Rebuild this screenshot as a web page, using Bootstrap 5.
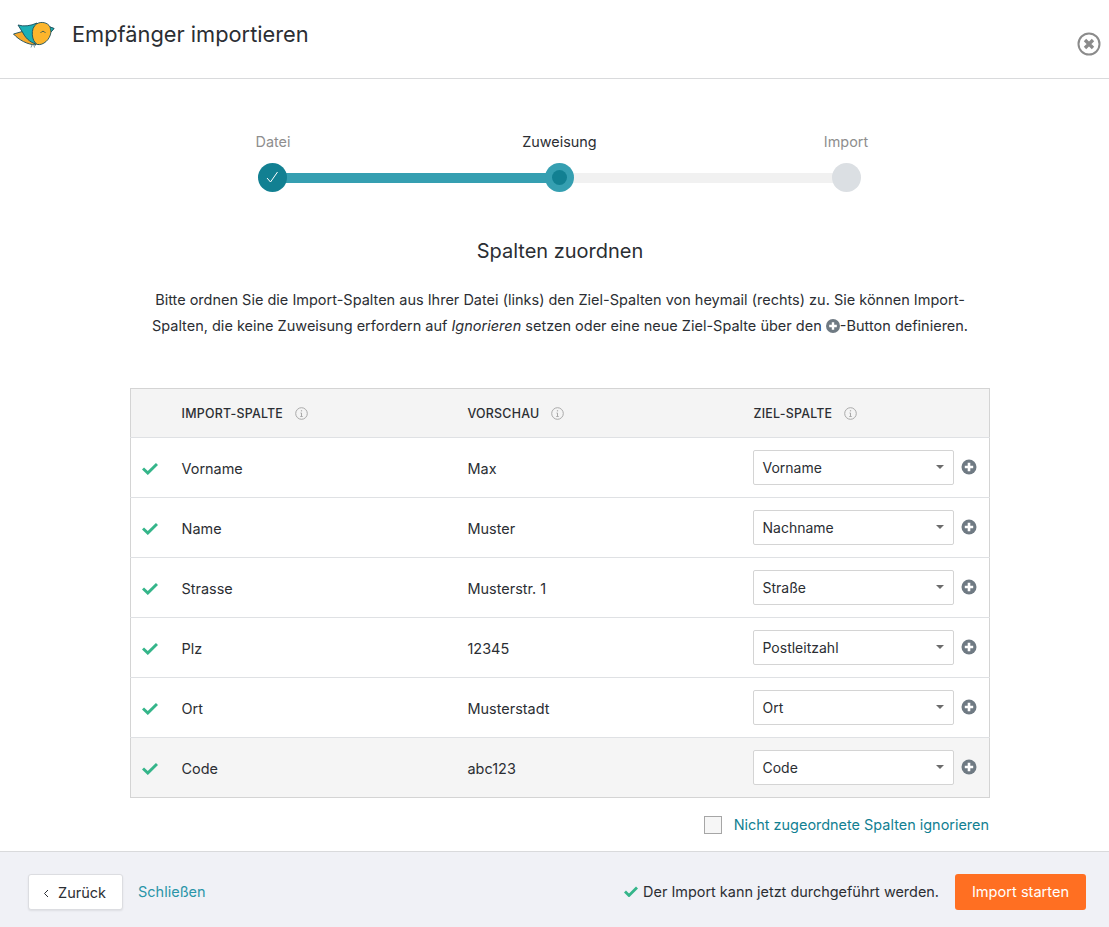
<!DOCTYPE html>
<html lang="de"><head><meta charset="utf-8"><title>Empfänger importieren</title>
<link href="https://cdn.jsdelivr.net/npm/bootstrap@5.3.0/dist/css/bootstrap.min.css" rel="stylesheet">
<style>
html,body{height:100%}
body{font-family:Inter,"Liberation Sans",sans-serif;font-size:14.45px;color:#2b2e33;background:#fff}
.shell{height:927px;width:1109px;overflow:hidden}
.topbar{height:79px;border-bottom:1px solid #d9dadc;padding:0 8px 10px 13px}
.topbar h1{font-size:21.8px;font-weight:400;margin:0 0 0 17px;color:#2b2e33}
.closer{margin-top:20px}
.mainarea{padding-left:11px}
.stepper{width:693px;margin:53px 0 0 202px}
.steplabel{width:120px;text-align:center;color:#8e8e8e;font-size:14.4px;line-height:20px}
.steplabel.on{color:#2b2e33}
.track{width:603px;height:29px;margin:11px auto 0;position:relative}
.track-bg{height:10px;background:#f1f1f1;position:absolute;left:14px;right:14px;top:10px}
.track-fill{height:10px;background:#359fb1;position:absolute;left:14px;width:288px;top:10px}
.dot{width:29px;height:29px;border-radius:50%;position:absolute;top:0}
.dot-done{left:0;background:#128092}
.dot-cur{left:287px;background:#359fb1}
.dot-cur::after{content:"";position:absolute;left:7px;top:7px;width:15px;height:15px;border-radius:50%;background:#128092}
.dot-next{right:0;background:#dbdfe3}
.subhead{font-size:20px;font-weight:400;text-align:center;margin:0;padding-top:45px;line-height:28px}
.intro{width:860px;margin:22px auto 0;text-align:center;line-height:26px;color:#2b2e33;font-size:14.5px}
.mapwrap{width:860px;margin:49px auto 0}
.maptable{width:860px;table-layout:fixed;border-collapse:collapse;border:1px solid #d4d4d4;margin:0}
.maptable th{background:#f4f4f4;height:49px;font-size:12.4px;font-weight:500;letter-spacing:.25px;color:#2b2e33;border-bottom:1px solid #dfe1e4;vertical-align:middle;padding:2px 0 0}
.maptable td{height:60px;border-bottom:1px solid #dfe1e4;vertical-align:middle;padding:1px 0 0;color:#2b2e33}
.maptable tr:last-child td{border-bottom:0;background:#f5f5f5}
.cellword{display:block;padding-top:2px}
.c0{width:51px}.c1,.c2{width:286px}
.tick{display:block;margin-left:11px}
.infoicon{margin-left:12px;vertical-align:-2px}
.pick{width:201px;height:35px;background:#fff;border:1px solid #d4d4d4;border-radius:2px;padding:0 9px;position:relative;font-size:14px;line-height:33px;margin-left:-1px}
.pick::after{content:"";position:absolute;right:9px;top:14px;border:4px solid transparent;border-top-color:#6c6c6c;border-bottom:0}
.cellflex{display:flex;align-items:center;gap:7px;margin-top:-2px}
.ignore{height:53px;gap:12px;color:#128092;padding-right:1px}
.box{width:18px;height:18px;border:1px solid #a6a6a6;background:#f6f6f6;display:block}
.footer-bar{height:76px;background:#f0f1f6;border-top:1px solid #d9dadc;padding:5px 23px 0 28px}
.backbtn{width:95px;height:36px;background:#fff;border:1px solid #dcdde1;border-radius:3px;box-shadow:0 1px 2px rgba(0,0,0,.08);color:#2b2e33;font-size:14.5px;padding:1px 2px 0 0}
.closelink{color:#2a95a8;text-decoration:none;margin-left:15px;font-size:14.5px}
.status{margin-right:16px;gap:5px}
.startbtn{width:131px;height:36px;background:#ff6f22;border:0;border-radius:3px;color:#fff;font-size:14.6px;padding:2px 0 0}
</style></head><body>
<div class="shell d-flex flex-column">
<header class="topbar d-flex align-items-center">
<svg width="42" height="27" viewBox="0 0 42 27" aria-label="Logo">
<path d="M0.5 13 L11 10 L23 24 C14 23.5 6 19 0.5 13Z" fill="#f7a92b" stroke="#1a4d5a" stroke-width=".9"/>
<path d="M5 4 Q14 6.5 24 2 L26 23.5 C19 23 13 18 10 12Z" fill="#1cb0b5" stroke="#1a4d5a" stroke-width=".9"/>
<path d="M23.5 3 C28 0 35 1.5 37 6 L41 7.5 L38 11 C37 19 30 24.5 24.5 23.5 C18.5 21 17 7 23.5 3Z" fill="#fcb52c" stroke="#1a4d5a" stroke-width=".9"/>
<path d="M37 6 L41 7.5 L38 11Z" fill="#1cb0b5" stroke="#1a4d5a" stroke-width=".7"/>
<path d="M27.5 12 Q30 8.5 32.5 12" fill="none" stroke="#1a4d5a" stroke-width=".8"/>
<path d="M19 24 L18 26.5M21 24.5 L21.5 26.5" stroke="#1a4d5a" stroke-width=".6"/>
</svg>
<h1>Empfänger importieren</h1>
<svg class="ms-auto closer" width="24" height="24" viewBox="0 0 24 24" fill="none" stroke="#8b8b8b" aria-label="Schließen"><circle cx="12" cy="12" r="10.5" stroke-width="2"/><path d="M8 8l8 8M16 8l-8 8" stroke-width="3.4"/></svg>
</header>
<main class="flex-grow-1 mainarea">
<div class="stepper">
<div class="d-flex justify-content-between"><span class="steplabel">Datei</span><span class="steplabel on">Zuweisung</span><span class="steplabel">Import</span></div>
<div class="track"><div class="track-bg"></div><div class="track-fill"></div>
<div class="dot dot-done"><svg width="29" height="29" viewBox="0 0 29 29" fill="none" stroke="#fff" stroke-width="1"><path d="M9 15l3.5 4 7-10"/></svg></div>
<div class="dot dot-cur"></div><div class="dot dot-next"></div></div>
</div>
<h2 class="subhead">Spalten zuordnen</h2>
<p class="intro"><span class="d-block">Bitte ordnen Sie die Import-Spalten aus Ihrer Datei (links) den Ziel-Spalten von heymail (rechts) zu. Sie können Import-</span><span class="d-block">Spalten, die keine Zuweisung erfordern auf <em>Ignorieren</em> setzen oder eine neue Ziel-Spalte über den <svg width="14" height="14" viewBox="0 0 14 14" style="vertical-align:-2px"><circle cx="7" cy="7" r="7" fill="#6f7a83"/><path d="M7 3.2v7.6M3.2 7h7.6" stroke="#fff" stroke-width="2.4"/></svg>-Button definieren.</span></p>
<div class="mapwrap">
<table class="maptable">
<thead><tr><th class="c0"></th>
<th class="c1">IMPORT-SPALTE<svg class="infoicon" width="13" height="13" viewBox="0 0 13 13" fill="none" stroke="#a9a9a9"><circle cx="6.5" cy="6.5" r="5.8"/><path d="M6.5 6v3.5M5.3 9.5h2.4M5.5 6h1" /><path d="M6.5 3.2v1.2" stroke-width="1.2"/></svg></th>
<th class="c2">VORSCHAU<svg class="infoicon" width="13" height="13" viewBox="0 0 13 13" fill="none" stroke="#a9a9a9"><circle cx="6.5" cy="6.5" r="5.8"/><path d="M6.5 6v3.5M5.3 9.5h2.4M5.5 6h1" /><path d="M6.5 3.2v1.2" stroke-width="1.2"/></svg></th>
<th>ZIEL-SPALTE<svg class="infoicon" width="13" height="13" viewBox="0 0 13 13" fill="none" stroke="#a9a9a9"><circle cx="6.5" cy="6.5" r="5.8"/><path d="M6.5 6v3.5M5.3 9.5h2.4M5.5 6h1" /><path d="M6.5 3.2v1.2" stroke-width="1.2"/></svg></th></tr></thead>
<tbody id="rows"></tbody></table>
<label class="ignore d-flex align-items-center justify-content-end"><span class="box"></span><span>Nicht zugeordnete Spalten ignorieren</span></label>
</div>
</main>
<footer class="footer-bar d-flex align-items-center">
<button class="backbtn" type="button"><svg width="7" height="9" viewBox="0 0 7 9" fill="none" stroke="#2b2e33" class="me-2"><path d="M5 1L1.5 4.5 5 8"/></svg>Zurück</button>
<a href="#" class="closelink">Schließen</a>
<span class="status ms-auto d-flex align-items-center"><svg width="14" height="11" viewBox="0 0 14 11"><path d="M1 5.5L5 9.5 13 1.5" fill="none" stroke="#35b58a" stroke-width="2.8"/></svg><span>Der Import kann jetzt durchgeführt werden.</span></span>
<button class="startbtn" type="button">Import starten</button>
</footer>
</div>
<script>
var data=[["Vorname","Max","Vorname"],["Name","Muster","Nachname"],["Strasse","Musterstr. 1","Straße"],["Plz","12345","Postleitzahl"],["Ort","Musterstadt","Ort"],["Code","abc123","Code"]];
document.getElementById("rows").innerHTML=data.map(function(r){return '<tr><td><svg class="tick" width="16" height="13" viewBox="0 0 16 13"><path d="M1 6.5L5.8 11 15 2" fill="none" stroke="#35b58a" stroke-width="3"/></svg></td><td><span class="cellword">'+r[0]+'</span></td><td><span class="cellword">'+r[1]+'</span></td><td><div class="cellflex"><div class="pick">'+r[2]+'</div><svg width="16" height="16" viewBox="0 0 16 16"><circle cx="8" cy="8" r="7.5" fill="#6f7a83"/><path d="M8 3.8v8.4M3.8 8h8.4" stroke="#fff" stroke-width="2.6"/></svg></div></td></tr>'}).join("");
</script>
<script src="https://cdn.jsdelivr.net/npm/bootstrap@5.3.0/dist/js/bootstrap.bundle.min.js"></script>
</body></html>
